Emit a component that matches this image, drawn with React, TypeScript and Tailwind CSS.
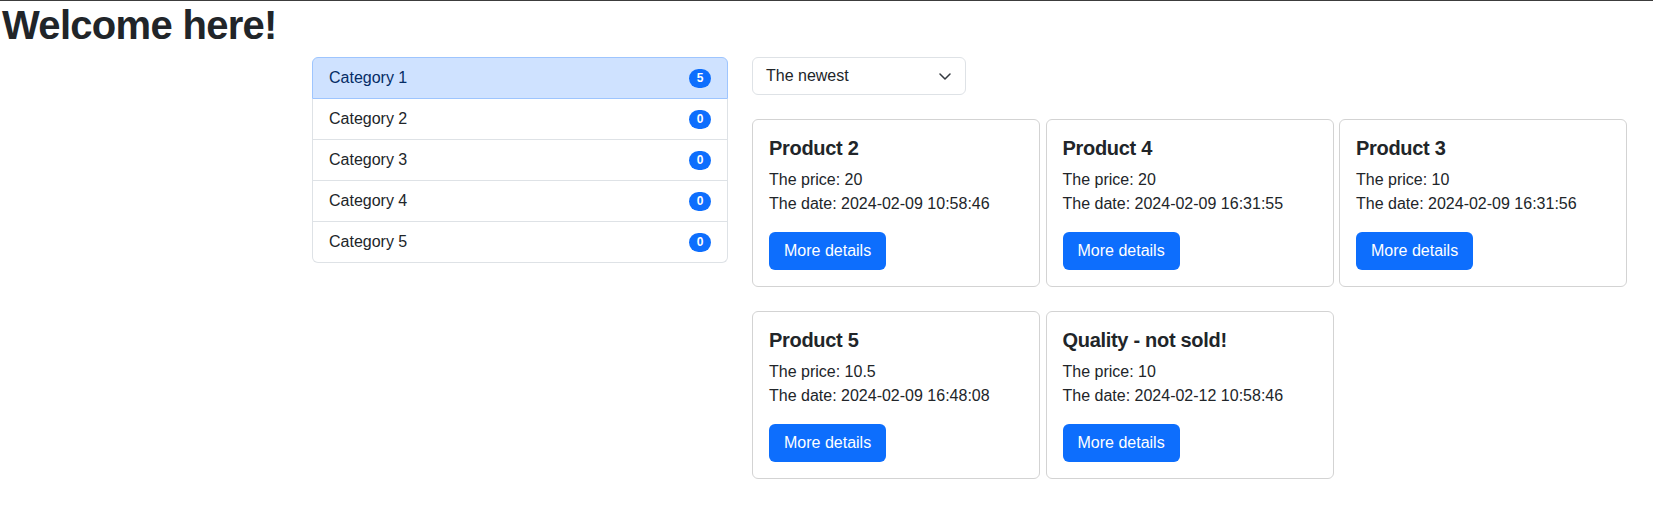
import React from "react";

const categories = [
  { name: "Category 1", count: 5 },
  { name: "Category 2", count: 0 },
  { name: "Category 3", count: 0 },
  { name: "Category 4", count: 0 },
  { name: "Category 5", count: 0 },
];

const products = [
  { title: "Product 2", price: "20", date: "2024-02-09 10:58:46" },
  { title: "Product 4", price: "20", date: "2024-02-09 16:31:55" },
  { title: "Product 3", price: "10", date: "2024-02-09 16:31:56" },
  { title: "Product 5", price: "10.5", date: "2024-02-09 16:48:08" },
  { title: "Quality - not sold!", price: "10", date: "2024-02-12 10:58:46" },
];

export default function App() {
  return (
    <div className="min-h-[527px] bg-white text-[#212529] font-['Liberation_Sans',Arial,sans-serif]">
      <div className="h-px bg-[#3c3c3c]" />
      <h1 className="pl-[2px] text-[40px] leading-[48px] font-bold tracking-[-0.7px] mb-2">
        Welcome here!
      </h1>
      <div className="flex gap-6 pl-[312px]">
        <div className="w-[416px] flex flex-col">
          {categories.map((c, i) => {
            const active = i === 0;
            const first = i === 0;
            const last = i === categories.length - 1;
            return (
              <div
                key={c.name}
                className={
                  "flex items-center justify-between px-4 py-2 text-[16px] leading-6 border " +
                  (active
                    ? "bg-[#cfe2ff] text-[#052c65] border-[#9ec5fe] "
                    : "bg-white border-[#dee2e6] border-t-0 ") +
                  (first ? "rounded-t-[6px] " : "") +
                  (last ? "rounded-b-[6px]" : "")
                }
              >
                <span>{c.name}</span>
                <span className="inline-flex h-[19px] min-w-[22px] items-center justify-center rounded-full bg-[#0d6efd] px-[7px] text-[12px] font-bold leading-none text-white">
                  {c.count}
                </span>
              </div>
            );
          })}
        </div>
        <div className="w-[875px] flex flex-col">
          <div className="mb-6 flex h-[38px] w-[214px] items-center justify-between rounded-[6px] border border-[#dee2e6] bg-white pl-[13px] pr-[14px] text-[16px] leading-6">
            <span>The newest</span>
            <svg width="12" height="7" viewBox="0 0 12 7" fill="none">
              <path
                d="M1 1 L6 6 L11 1"
                stroke="#343a40"
                strokeWidth="1.5"
                strokeLinecap="round"
                strokeLinejoin="round"
              />
            </svg>
          </div>
          <div className="grid grid-cols-3 gap-x-[5.5px] gap-y-6">
            {products.map((p) => (
              <div
                key={p.title}
                className="rounded-[6px] border border-[#d3d3d3] bg-white p-4"
              >
                <h5 className="mb-2 text-[20px] leading-6 font-bold tracking-[-0.3px]">
                  {p.title}
                </h5>
                <p className="mb-4 text-[16px] leading-6">
                  The price: {p.price}
                  <br />
                  The date: {p.date}
                </p>
                <button className="h-[38px] rounded-[6px] bg-[#0d6efd] px-[15px] text-[16px] leading-6 text-white">
                  More details
                </button>
              </div>
            ))}
          </div>
        </div>
      </div>
    </div>
  );
}
